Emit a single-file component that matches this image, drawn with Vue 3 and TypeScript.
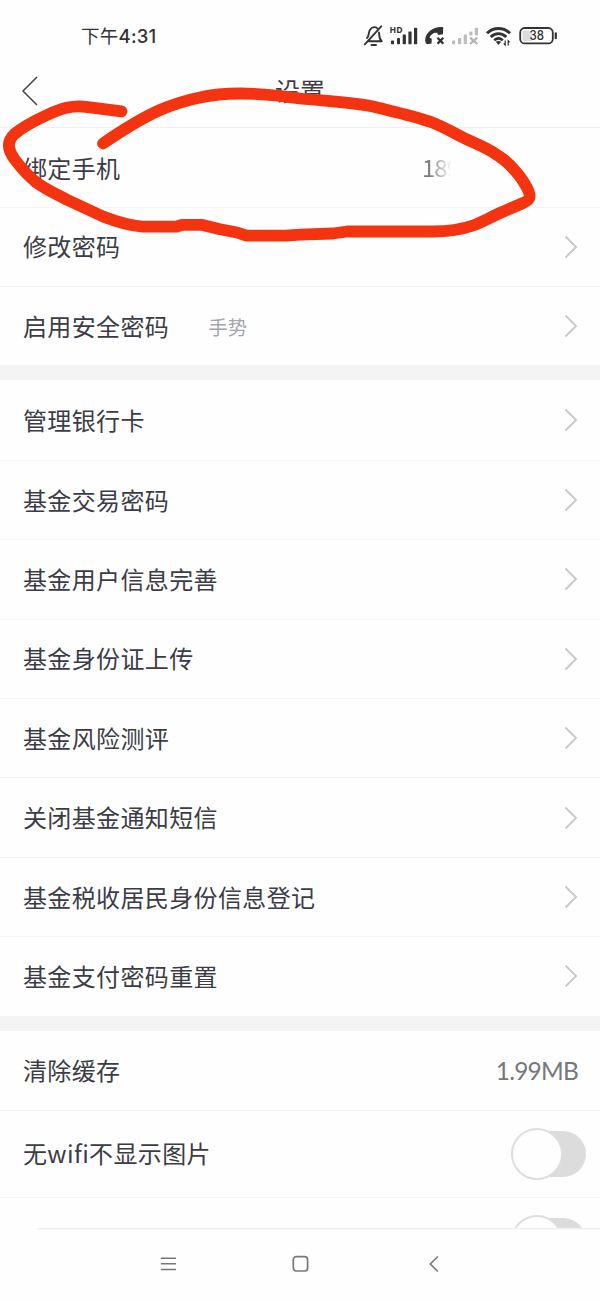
<script setup lang="ts">
interface Row {
  label: string
  note?: string
  value?: string
  kind: 'phone' | 'link' | 'value' | 'switch'
}

const link = (label: string, note?: string): Row => ({ label, note, kind: 'link' })

const groups: Row[][] = [
  [
    { label: '绑定手机', value: '189', kind: 'phone' },
    link('修改密码'),
    link('启用安全密码', '手势'),
  ],
  [
    link('管理银行卡'),
    link('基金交易密码'),
    link('基金用户信息完善'),
    link('基金身份证上传'),
    link('基金风险测评'),
    link('关闭基金通知短信'),
    link('基金税收居民身份信息登记'),
    link('基金支付密码重置'),
  ],
  [
    { label: '清除缓存', value: '1.99MB', kind: 'value' },
    { label: '无wifi不显示图片', kind: 'switch' },
    { label: '', kind: 'switch' },
  ],
]
</script>

<template>
  <div class="screen">
    <div class="status">
      <span class="time">下午<b>4:31</b></span>
      <svg class="indicators" width="210" height="45" viewBox="0 0 210 45">
        <g fill="none" stroke="#333" stroke-width="1.9" stroke-linecap="round" stroke-linejoin="round">
          <path d="M14 26.300H26.800M12 23C14.500 21 13 17.500 15.200 14.500C17.500 11.500 21 11.500 22.500 13.500M24 17.500C24.300 21 24 23.500 26.500 26M26.200 11.300L9.800 29.300" />
          <path d="M16.500 30h4.500" />
        </g>
        <text x="34.500" y="18.300" class="hd" textLength="13" lengthAdjust="spacingAndGlyphs">HD</text>
        <g fill="#333">
          <rect x="36" y="25.500" width="3" height="3.700" rx=".6" />
          <rect x="42" y="23" width="3" height="6.200" rx=".6" />
          <rect x="47.700" y="19.500" width="3.200" height="9.700" rx=".6" />
          <rect x="53.400" y="16.500" width="3.200" height="12.700" rx=".6" />
          <rect x="59" y="12.800" width="3.200" height="16.400" rx=".6" />
          <path d="M88.200 12.200C79 11 70.500 17 70.200 25C70.200 27.500 71 29 72.500 29.200L76.500 28.500L76.800 23.800L74.500 22.700C75.500 19.500 79 17.300 82.300 17.800L83 20L88 19.300Z" />
        </g>
        <path d="M82.500 22.700L88.300 28.800M88.300 22.700L82.500 28.800" stroke="#333" stroke-width="2.300" />
        <g fill="#bdbdbd">
          <rect x="97" y="25.500" width="3.200" height="3.700" rx=".6" />
          <rect x="103" y="23" width="3.200" height="6.200" rx=".6" />
          <rect x="108.700" y="19.500" width="3.200" height="9.700" rx=".6" />
          <rect x="114.300" y="16.500" width="3.200" height="4" rx=".6" />
          <rect x="119.800" y="12.800" width="3.200" height="7.700" rx=".6" />
        </g>
        <path d="M115 22.600L122.300 29M122.300 22.600L115 29" stroke="#b4b4b4" stroke-width="2.200" />
        <g fill="none" stroke="#333" stroke-width="3">
          <path d="M132 18.300C138.500 11.800 148.500 11.800 155 18.300" />
          <path d="M135.700 22C140.500 17.500 146.500 17.500 151.300 22" />
          <path d="M139.200 25.300C142 22.800 145 22.800 147.800 25.300" stroke-width="2.600" />
        </g>
        <path d="M140.800 26.800Q143.500 25 146.200 26.800L143.500 30Z" fill="#333" />
        <path d="M150.200 25.500V30L148.800 28.500M153.200 30.500V25.800L154.700 27.400" fill="none" stroke="#333" stroke-width="1.200" />
        <rect x="165.200" y="13" width="32.600" height="15.400" rx="4.500" fill="none" stroke="#333" stroke-width="1.800" />
        <path d="M168.500 15.500H177V26H168.500Q167.500 26 167.500 25V16.500Q167.500 15.500 168.500 15.500Z" fill="#ddd" />
        <path d="M200.800 18.300V23.200" stroke="#333" stroke-width="2.200" stroke-linecap="round" />
        <text x="174.500" y="25.400" class="charge" textLength="14.500" lengthAdjust="spacingAndGlyphs">38</text>
      </svg>
    </div>

    <header class="header">
      <svg class="back" width="18" height="32" viewBox="0 0 18 32">
        <path d="M16 2L2 16L16 30" fill="none" stroke="#44444c" stroke-width="1.500" />
      </svg>
      <h1 class="title">设置</h1>
    </header>

    <main class="list">
      <section v-for="(group, g) in groups" :key="g" class="group">
        <div v-for="(row, r) in group" :key="r" class="row" :class="row.kind">
          <span class="label">{{ row.label }}</span>
          <span v-if="row.note" class="note">{{ row.note }}</span>
          <span v-if="row.value" class="amount">{{ row.value }}</span>
          <svg v-if="row.kind === 'link'" class="chevron" width="14" height="24" viewBox="0 0 14 24">
            <path d="M1.500 1.500L12 12L1.500 22.500" fill="none" stroke="#c9c9c9" stroke-width="1.900" />
          </svg>
          <span v-if="row.kind === 'switch'" class="toggle"><i class="knob"></i></span>
        </div>
      </section>
    </main>

    <nav class="nav">
      <svg width="20" height="20" viewBox="0 0 20 20">
        <path d="M2.800 4.200H18M2.800 9.800H18M2.800 15.500H18" fill="none" stroke="#777" stroke-width="1.500" />
      </svg>
      <svg width="20" height="20" viewBox="0 0 20 20">
        <rect x="3.300" y="2.700" width="14.300" height="14.300" rx="3" fill="none" stroke="#777" stroke-width="1.700" />
      </svg>
      <svg width="20" height="20" viewBox="0 0 20 20">
        <path d="M14.800 2.500L7.300 10L14.800 17.500" fill="none" stroke="#777" stroke-width="1.600" />
      </svg>
    </nav>

    <svg class="marker" width="600" height="300" viewBox="0 0 600 300">
      <path
        d="M121.500 111.300L86 106.800C72 105 61 108.500 47 115C33 121.500 22 127.500 14.500 134C7 141 7 149.500 15.500 160.500C22 169 27 175 36.500 182.500C46 189.500 56 194 66.500 199.500L103 216.500C117 222 130 225.500 143 226.700H176.500L182 224.800H201.500L220 229.200L237 232.500L246.500 235.700H286L300 234.700L333 233.500L347 231.500H433C448 231.500 460 230 473 225.500C483 222 490 217.500 500 213L522 203.500C530 200 531 197.500 528.500 191C525 183 520 176 514 169.500C508 162 501 157 493 152.300C483 146 473 142.500 463 137.500C452 132 443 126.500 431 122C413 115.500 393 111.500 373 106.500C350 102 325 101 300 98.500C280 95.500 260 93.500 240 93.500C226 93.500 213 94.500 200 97.500C185 100.500 173 104.500 160 110C142 118 124 129 103 143.500"
      />
    </svg>
  </div>
</template>

<style>
body {
  margin: 0;
}
</style>

<style scoped>
.screen {
  position: relative;
  display: flex;
  flex-direction: column;
  width: 600px;
  height: 1300px;
  overflow: hidden;
  background: #fefefe;
  color: #3c3c46;
  font-family: "Noto Sans CJK SC", sans-serif;
}
.status {
  display: flex;
  justify-content: space-between;
  height: 60px;
  flex: none;
  box-sizing: border-box;
  padding: 15px 35px 0 81px;
}
.time {
  font-size: 18.500px;
  line-height: 40px;
  font-weight: 400;
  letter-spacing: 0.300px;
  color: #333;
}
.time b {
  font-family: Inter, sans-serif;
  font-size: 18.500px;
  font-weight: 500;
  letter-spacing: 0.200px;
}
.hd {
  font: 700 9px "Noto Sans", sans-serif;
  fill: #333;
}
.charge {
  font: 500 13px Inter, sans-serif;
  fill: #333;
}
.header {
  display: grid;
  grid-template-columns: 21px 18px 1fr 39px;
  align-items: center;
  height: 68px;
  flex: none;
  box-sizing: border-box;
  padding-bottom: 5px;
  border-bottom: 1px solid #f0f0f0;
}
.back {
  grid-column: 2;
}
.title {
  margin: -3px 0 0;
  text-align: center;
  font-size: 25px;
  line-height: 36px;
  font-weight: 400;
}
.list {
  flex: 1;
  min-height: 0;
  overflow: hidden;
}
.group + .group {
  border-top: 15px solid #f4f4f4;
}
.row {
  display: flex;
  align-items: center;
  height: 79.400px;
  box-sizing: border-box;
  padding: 0 22px 0 23px;
}
.row.phone {
  height: 78.700px;
  padding-top: 2px;
}
.row + .row {
  border-top: 1px solid #f5f5f5;
}
.label {
  margin-top: -1px;
  font-size: 24px;
  letter-spacing: 0.370px;
  line-height: 36px;
}
.note {
  margin-left: 39px;
  font-size: 19.500px;
  color: #a5a5ab;
}
.chevron {
  margin-left: auto;
}
.amount {
  margin-left: auto;
  font-family: Lato, sans-serif;
  font-size: 24.500px;
  letter-spacing: -0.800px;
  color: #77777d;
}
.phone .amount {
  margin-right: 119px;
  font-family: "Noto Sans CJK SC", sans-serif;
  font-size: 24px;
  line-height: 36px;
  margin-top: -2px;
  letter-spacing: -1px;
  color: transparent;
  background: linear-gradient(90deg, #777 15%, #bbb 50%, #fefefe 80%);
  background-clip: text;
}
.row.switch {
  height: 87px;
  padding-right: 14px;
}
.toggle {
  display: flex;
  align-items: center;
  width: 73px;
  height: 46px;
  margin-left: auto;
  border-radius: 23px;
  background: #dcdcdc;
}
.knob {
  flex: none;
  box-sizing: border-box;
  width: 52px;
  height: 52px;
  margin-left: -2px;
  border: 2px solid #dedede;
  border-radius: 50%;
  background: #fefefe;
}
.nav {
  display: grid;
  grid-template-columns: repeat(3, 20px);
  justify-content: center;
  column-gap: 112.500px;
  height: 72.500px;
  flex: none;
  box-sizing: border-box;
  padding-top: 26px;
  background: linear-gradient(#f1f1f1, #f1f1f1) 37px 0 / 563px 1.500px no-repeat;
}
.marker {
  position: absolute;
  left: 0;
  top: 0;
  fill: none;
  stroke: #f43410;
  stroke-width: 11.800px;
  stroke-linecap: round;
  stroke-linejoin: round;
}
</style>
